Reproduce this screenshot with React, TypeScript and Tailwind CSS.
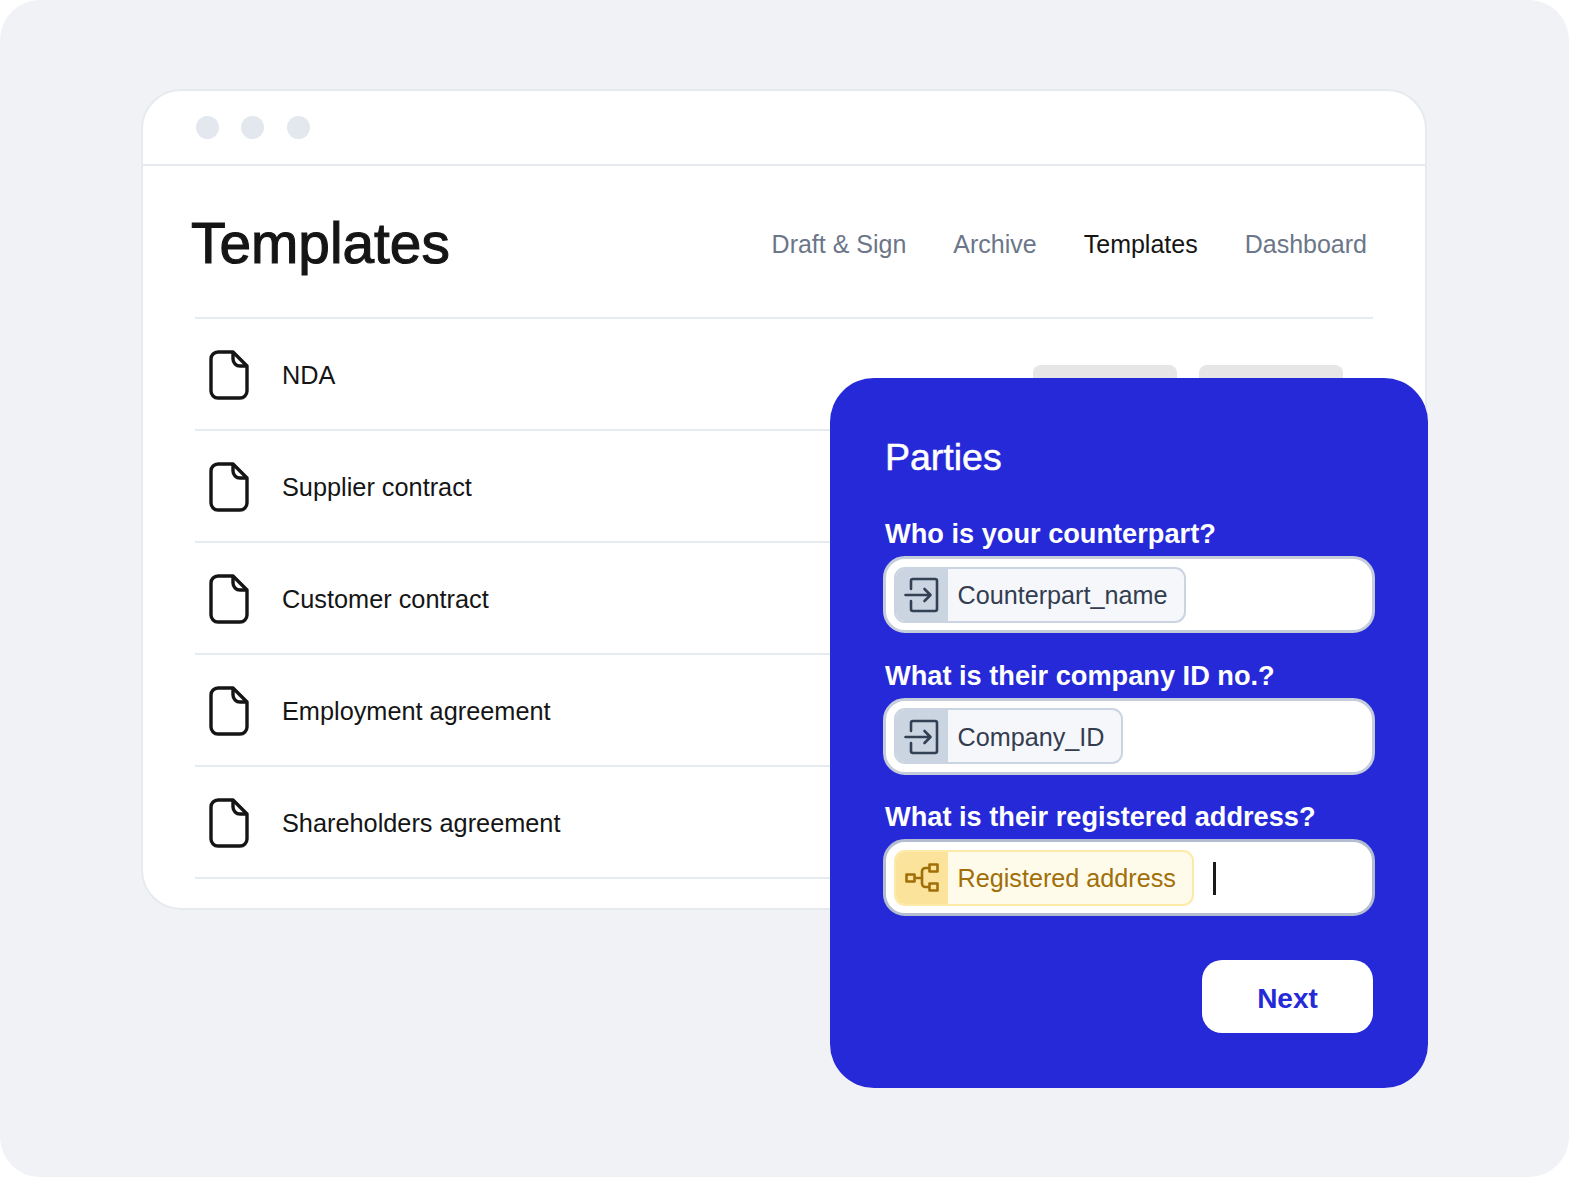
import React from 'react';

const rows = ['NDA', 'Supplier contract', 'Customer contract', 'Employment agreement', 'Shareholders agreement'];
const nav = [
  { label: 'Draft & Sign', active: false },
  { label: 'Archive', active: false },
  { label: 'Templates', active: true },
  { label: 'Dashboard', active: false }
];

const FileIcon = () => (
  <svg width="40" height="52" viewBox="0 0 40 52" fill="none" stroke="#151515" strokeWidth="3.4" strokeLinejoin="round" className="shrink-0">
    <path d="M9 3H24L38 17V42a7 7 0 0 1-7 7H9a7 7 0 0 1-7-7V10a7 7 0 0 1 7-7z" />
    <path d="M24 3V10a7 7 0 0 0 7 7H38" />
  </svg>
);

const InputIcon = () => (
  <svg width="36" height="36" viewBox="0 0 36 36" fill="none" stroke="#334155" strokeWidth="2.6" strokeLinecap="round" strokeLinejoin="round" className="mt-[1px]">
    <path d="M7 12V4a2 2 0 0 1 2-2h22a2 2 0 0 1 2 2v28a2 2 0 0 1-2 2H9a2 2 0 0 1-2-2v-8" />
    <path d="M1.5 18H26.5M20.5 12l6 6-6 6" />
  </svg>
);

const TreeIcon = () => (
  <svg width="36" height="36" viewBox="0 0 36 36" fill="none" stroke="#a16f08" strokeWidth="2.6" strokeLinejoin="round" className="mt-[1px]">
    <rect x="2.5" y="14.5" width="8" height="7" />
    <rect x="25.5" y="4.5" width="8" height="7" />
    <rect x="25.5" y="23.5" width="8" height="7" />
    <path d="M10.5 18H18M25.5 8H21.5a3.5 3.5 0 0 0-3.5 3.5V23.5a3.5 3.5 0 0 0 3.5 3.5H25.5" />
  </svg>
);

const Field = ({ label, value, yellow, cursor }: { label: string; value: string; yellow?: boolean; cursor?: boolean }) => (
  <div className="flex flex-col">
    <label className="pl-[2px] text-[27.2px] leading-[32px] font-bold text-white">{label}</label>
    <div className={`mt-[6px] h-[77px] w-[492px] rounded-[22px] bg-white border-[3px] flex items-center pl-[8px] ${yellow ? 'border-[#b4bdd0]' : 'border-[#c5ccda]'}`}>
      <div className={`h-[56px] flex items-stretch rounded-[11px] border-2 overflow-hidden ${yellow ? 'border-[#fde9a8] bg-[#fffbeb]' : 'border-[#cbd5e1] bg-[#f5f7fb]'}`}>
        <span className={`w-[52px] flex items-center justify-center ${yellow ? 'bg-[#fbe39c]' : 'bg-[#cbd5e1]'}`}>
          {yellow ? <TreeIcon /> : <InputIcon />}
        </span>
        <span className={`pl-[9.5px] pr-[16.5px] pt-[3px] flex items-center text-[25.2px] ${yellow ? 'text-[#a16f08]' : 'text-[#333d4f]'}`}>{value}</span>
      </div>
      {cursor && <span className="ml-[19px] mt-[2px] w-[2.5px] h-[33px] bg-[#1a1a1a]" />}
    </div>
  </div>
);

const App: React.FC = () => {
  return <div className="bg-white font-['Liberation_Sans',Arial,sans-serif]">
      <div className="relative h-[1177px] rounded-[40px] bg-[#f0f2f6] pt-[89px] pl-[141px]">
        {/* Browser window */}
        <div className="w-[1286px] h-[821px] rounded-[40px] bg-white border-2 border-[#e6eaef]">
          <div className="h-[75px] border-b-2 border-[#e6eaef] flex items-center gap-[22.5px] pl-[52.5px]">
            <span className="w-[23px] h-[23px] rounded-full bg-[#e3e8ee]" />
            <span className="w-[23px] h-[23px] rounded-full bg-[#e3e8ee]" />
            <span className="w-[23px] h-[23px] rounded-full bg-[#e3e8ee]" />
          </div>

          <div className="h-[151px] flex items-center justify-between pl-[48px] pr-[58px] pt-[3px]">
            <h1 className="mt-[1px] text-[56.8px] font-normal text-[#151515] [-webkit-text-stroke:1.1px_#151515]">Templates</h1>
            <nav className="mt-[4px] flex gap-[47px] text-[25px]">
              {nav.map(item => <span key={item.label} className={item.active ? 'text-[#151515]' : 'text-[#6b7688]'}>{item.label}</span>)}
            </nav>
          </div>

          {/* Template list */}
          <ul className="ml-[52px] w-[1178px] border-t-2 border-[#e6ebf0]">
            {rows.map((row, i) => <li key={row} className="h-[112px] border-b-2 border-[#e6ebf0] flex items-center pl-[14px] pt-[2px]">
                <FileIcon />
                <span className="ml-[33px] mt-[2px] text-[25.3px] text-[#151515]">{row}</span>
                {i === 0 && <div className="ml-auto mr-[30px] flex gap-[22px]">
                    <span className="w-[144px] h-[20px] rounded-[8px] bg-[#e6e6e6]" />
                    <span className="w-[144px] h-[20px] rounded-[8px] bg-[#e6e6e6]" />
                  </div>}
              </li>)}
          </ul>
        </div>

        {/* Parties form */}
        <div className="absolute left-[830px] top-[378px] w-[598px] h-[710px] rounded-[44px] bg-[#2529d8] pl-[53px] pt-[54px]">
          <h2 className="pl-[2px] text-[37.5px] leading-[50px] text-white [-webkit-text-stroke:0.5px_#ffffff]">Parties</h2>
          <div className="mt-[36px] flex flex-col gap-[26.5px]">
            <Field label="Who is your counterpart?" value="Counterpart_name" />
            <Field label="What is their company ID no.?" value="Company_ID" />
            <Field label="What is their registered address?" value="Registered address" yellow cursor />
          </div>
          <div className="mt-[44px] w-[490px] flex justify-end">
            <button className="w-[171px] h-[73px] pt-[5px] rounded-[20px] bg-white text-[28px] font-bold text-[#2529d8]">Next</button>
          </div>
        </div>
      </div>
    </div>;
};

export default App;
